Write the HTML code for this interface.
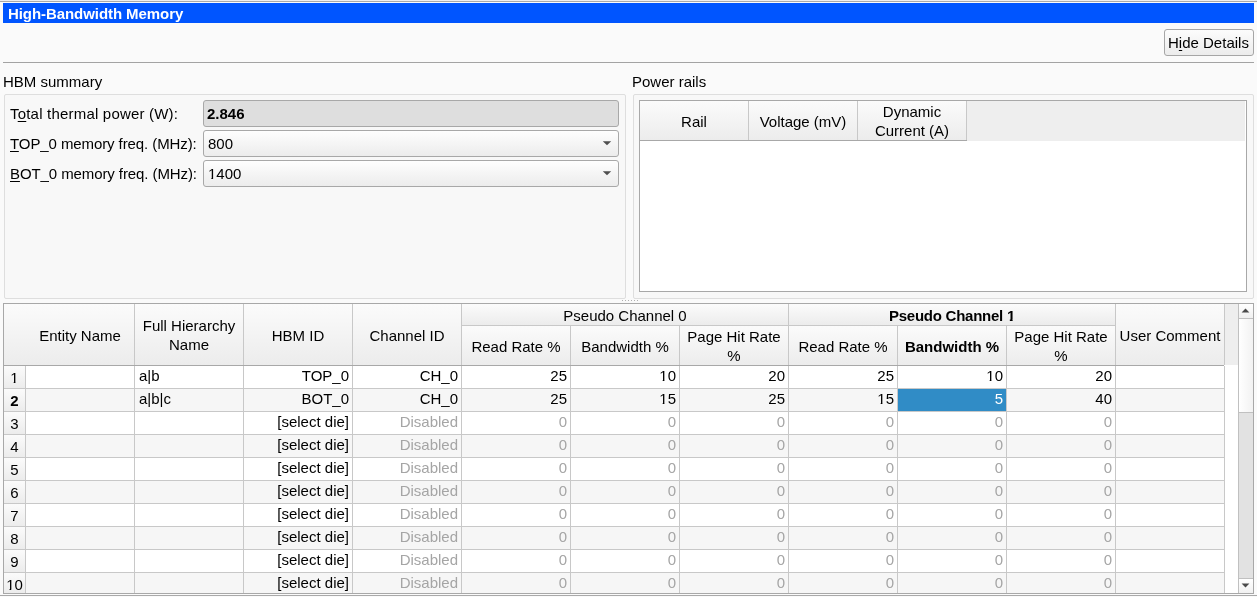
<!DOCTYPE html>
<html><head><meta charset="utf-8"><style>
html,body{margin:0;padding:0;}
body{width:1257px;height:597px;overflow:hidden;position:relative;background:#fafafa;font-family:"Liberation Sans",sans-serif;font-size:15px;color:#000;}
body>div{position:absolute;box-sizing:content-box;}
.t{will-change:transform;white-space:nowrap;line-height:17px;height:17px;}
.oneb{display:inline-block;clip-path:polygon(0 0,100% 0,100% 12px,5.7px 12px,5.7px 17px,2.9px 17px,2.9px 12px,0 12px);}
.one{display:inline-block;clip-path:polygon(0 0,100% 0,100% 13px,5.1px 13px,5.1px 17px,3.4px 17px,3.4px 13px,0 13px);}
u{text-decoration:underline;text-underline-offset:2px;}
</style></head><body>
<div style="left:0px;top:1px;width:1257px;height:1px;background:#a9a9a9"></div>
<div style="left:0px;top:0px;width:1257px;height:1px;background:#eeeeee"></div>
<div style="left:3px;top:3px;width:1251px;height:20px;background:#0055ff"></div>
<div class="t" style="left:7.7px;top:5.00px;text-align:left;color:#fff;font-weight:bold;letter-spacing:-0.07px">High-Bandwidth Memory</div>
<div style="left:1164px;top:29px;width:88px;height:25px;border:1px solid #a6a6a6;border-radius:3px;background:linear-gradient(#fcfcfc,#ececec)"></div>
<div class="t" style="left:1167.5px;top:34.00px;text-align:left;">H<u>i</u>de Details</div>
<div style="left:3px;top:62px;width:1251px;height:1px;background:#a3a3a3"></div>
<div class="t" style="left:2.5px;top:73.00px;text-align:left;">HBM summary</div>
<div class="t" style="left:631.5px;top:73.00px;text-align:left;">Power rails</div>
<div style="left:4px;top:94px;width:620px;height:203px;border:1px solid #dedede;border-radius:2px;background:#f8f8f8"></div>
<div style="left:633px;top:94px;width:619px;height:203px;border:1px solid #dedede;border-radius:2px;background:#f8f8f8"></div>
<div class="t" style="left:9.7px;top:105.00px;text-align:left;letter-spacing:0.2px">T<u>o</u>tal thermal power (W):</div>
<div class="t" style="left:9.7px;top:135.00px;text-align:left;letter-spacing:-0.09px"><u>T</u>OP_0 memory freq. (MHz):</div>
<div class="t" style="left:9.7px;top:165.00px;text-align:left;letter-spacing:-0.09px"><u>B</u>OT_0 memory freq. (MHz):</div>
<div style="left:203px;top:100px;width:414px;height:25px;border:1px solid #a8a8a8;border-radius:3px;background:#dedede"></div>
<div class="t" style="left:207px;top:105.00px;text-align:left;font-weight:bold">2.846</div>
<div style="left:203px;top:130px;width:414px;height:25px;border:1px solid #a8a8a8;border-radius:3px;background:linear-gradient(#fefefe,#ececec)"></div>
<div class="t" style="left:208px;top:135.00px;text-align:left;">800</div>
<div style="left:203px;top:160px;width:414px;height:25px;border:1px solid #a8a8a8;border-radius:3px;background:linear-gradient(#fefefe,#ececec)"></div>
<div class="t" style="left:208px;top:165.00px;text-align:left;"><span class="one">1</span>400</div>
<div style="left:639px;top:100px;width:606px;height:190px;border:1px solid #a8a8a8;background:#fff"></div>
<div style="left:640px;top:101px;width:605px;height:40px;background:#eeeeee"></div>
<div style="left:640px;top:101px;width:108px;height:39px;background:linear-gradient(#fbfbfb,#ececec);border-right:1px solid #c8c8c8"></div>
<div style="left:749px;top:101px;width:108px;height:39px;background:linear-gradient(#fbfbfb,#ececec);border-right:1px solid #c8c8c8"></div>
<div style="left:858px;top:101px;width:108px;height:39px;background:linear-gradient(#fbfbfb,#ececec);border-right:1px solid #c8c8c8"></div>
<div style="left:640px;top:140px;width:327px;height:1px;background:#a8a8a8"></div>
<div class="t" style="left:640px;top:113.00px;width:108px;text-align:center;">Rail</div>
<div class="t" style="left:749px;top:113.00px;width:108px;text-align:center;">Voltage (mV)</div>
<div class="t" style="left:858px;top:103.00px;width:108px;text-align:center;">Dynamic</div>
<div class="t" style="left:858px;top:122.00px;width:108px;text-align:center;">Current (A)</div>
<div style="left:622px;top:300px;width:1px;height:1px;background:#b0b0b0"></div>
<div style="left:625px;top:300px;width:1px;height:1px;background:#b0b0b0"></div>
<div style="left:628px;top:300px;width:1px;height:1px;background:#b0b0b0"></div>
<div style="left:631px;top:300px;width:1px;height:1px;background:#b0b0b0"></div>
<div style="left:634px;top:300px;width:1px;height:1px;background:#b0b0b0"></div>
<div style="left:637px;top:300px;width:1px;height:1px;background:#b0b0b0"></div>
<div style="left:3px;top:303px;width:1249px;height:289px;border:1px solid #a8a8a8;background:#fff"></div>
<div style="left:26px;top:366px;width:1198px;height:22px;background:#ffffff"></div>
<div style="left:26px;top:388px;width:1198px;height:1px;background:#c8c8c8"></div>
<div style="left:26px;top:389px;width:1198px;height:22px;background:#f6f6f6"></div>
<div style="left:26px;top:411px;width:1198px;height:1px;background:#c8c8c8"></div>
<div style="left:26px;top:412px;width:1198px;height:22px;background:#ffffff"></div>
<div style="left:26px;top:434px;width:1198px;height:1px;background:#c8c8c8"></div>
<div style="left:26px;top:435px;width:1198px;height:22px;background:#f6f6f6"></div>
<div style="left:26px;top:457px;width:1198px;height:1px;background:#c8c8c8"></div>
<div style="left:26px;top:458px;width:1198px;height:22px;background:#ffffff"></div>
<div style="left:26px;top:480px;width:1198px;height:1px;background:#c8c8c8"></div>
<div style="left:26px;top:481px;width:1198px;height:22px;background:#f6f6f6"></div>
<div style="left:26px;top:503px;width:1198px;height:1px;background:#c8c8c8"></div>
<div style="left:26px;top:504px;width:1198px;height:22px;background:#ffffff"></div>
<div style="left:26px;top:526px;width:1198px;height:1px;background:#c8c8c8"></div>
<div style="left:26px;top:527px;width:1198px;height:22px;background:#f6f6f6"></div>
<div style="left:26px;top:549px;width:1198px;height:1px;background:#c8c8c8"></div>
<div style="left:26px;top:550px;width:1198px;height:22px;background:#ffffff"></div>
<div style="left:26px;top:572px;width:1198px;height:1px;background:#c8c8c8"></div>
<div style="left:26px;top:573px;width:1198px;height:20px;background:#f6f6f6"></div>
<div style="left:134px;top:366px;width:1px;height:227px;background:#c8c8c8"></div>
<div style="left:243px;top:366px;width:1px;height:227px;background:#c8c8c8"></div>
<div style="left:352px;top:366px;width:1px;height:227px;background:#c8c8c8"></div>
<div style="left:461px;top:366px;width:1px;height:227px;background:#c8c8c8"></div>
<div style="left:570px;top:366px;width:1px;height:227px;background:#c8c8c8"></div>
<div style="left:679px;top:366px;width:1px;height:227px;background:#c8c8c8"></div>
<div style="left:788px;top:366px;width:1px;height:227px;background:#c8c8c8"></div>
<div style="left:897px;top:366px;width:1px;height:227px;background:#c8c8c8"></div>
<div style="left:1006px;top:366px;width:1px;height:227px;background:#c8c8c8"></div>
<div style="left:1115px;top:366px;width:1px;height:227px;background:#c8c8c8"></div>
<div style="left:1224px;top:366px;width:1px;height:227px;background:#c8c8c8"></div>
<div style="left:4px;top:304px;width:1234px;height:61px;background:#eeeeee"></div>
<div style="left:4px;top:304px;width:130px;height:61px;background:linear-gradient(#fbfbfb,#ececec);border-right:1px solid #c8c8c8"></div>
<div style="left:135px;top:304px;width:108px;height:61px;background:linear-gradient(#fbfbfb,#ececec);border-right:1px solid #c8c8c8"></div>
<div style="left:244px;top:304px;width:108px;height:61px;background:linear-gradient(#fbfbfb,#ececec);border-right:1px solid #c8c8c8"></div>
<div style="left:353px;top:304px;width:108px;height:61px;background:linear-gradient(#fbfbfb,#ececec);border-right:1px solid #c8c8c8"></div>
<div style="left:462px;top:304px;width:326px;height:21px;background:linear-gradient(#fbfbfb,#ececec);border-right:1px solid #c8c8c8"></div>
<div style="left:462px;top:325px;width:327px;height:1px;background:#c8c8c8"></div>
<div style="left:462px;top:326px;width:108px;height:39px;background:linear-gradient(#fbfbfb,#ececec);border-right:1px solid #c8c8c8"></div>
<div style="left:571px;top:326px;width:108px;height:39px;background:linear-gradient(#fbfbfb,#ececec);border-right:1px solid #c8c8c8"></div>
<div style="left:680px;top:326px;width:108px;height:39px;background:linear-gradient(#fbfbfb,#ececec);border-right:1px solid #c8c8c8"></div>
<div style="left:789px;top:304px;width:326px;height:21px;background:linear-gradient(#fbfbfb,#ececec);border-right:1px solid #c8c8c8"></div>
<div style="left:789px;top:325px;width:327px;height:1px;background:#c8c8c8"></div>
<div style="left:789px;top:326px;width:108px;height:39px;background:linear-gradient(#fbfbfb,#ececec);border-right:1px solid #c8c8c8"></div>
<div style="left:898px;top:326px;width:108px;height:39px;background:linear-gradient(#fbfbfb,#ececec);border-right:1px solid #c8c8c8"></div>
<div style="left:1007px;top:326px;width:108px;height:39px;background:linear-gradient(#fbfbfb,#ececec);border-right:1px solid #c8c8c8"></div>
<div style="left:1116px;top:304px;width:108px;height:61px;background:linear-gradient(#fbfbfb,#ececec);border-right:1px solid #c8c8c8"></div>
<div style="left:4px;top:365px;width:1220px;height:1px;background:#a8a8a8"></div>
<div style="left:4px;top:366px;width:21px;height:22px;background:linear-gradient(#fbfbfb,#ececec);border-right:1px solid #c8c8c8;border-bottom:1px solid #c8c8c8"></div>
<div style="left:4px;top:389px;width:21px;height:22px;background:linear-gradient(#fbfbfb,#ececec);border-right:1px solid #c8c8c8;border-bottom:1px solid #c8c8c8"></div>
<div style="left:4px;top:412px;width:21px;height:22px;background:linear-gradient(#fbfbfb,#ececec);border-right:1px solid #c8c8c8;border-bottom:1px solid #c8c8c8"></div>
<div style="left:4px;top:435px;width:21px;height:22px;background:linear-gradient(#fbfbfb,#ececec);border-right:1px solid #c8c8c8;border-bottom:1px solid #c8c8c8"></div>
<div style="left:4px;top:458px;width:21px;height:22px;background:linear-gradient(#fbfbfb,#ececec);border-right:1px solid #c8c8c8;border-bottom:1px solid #c8c8c8"></div>
<div style="left:4px;top:481px;width:21px;height:22px;background:linear-gradient(#fbfbfb,#ececec);border-right:1px solid #c8c8c8;border-bottom:1px solid #c8c8c8"></div>
<div style="left:4px;top:504px;width:21px;height:22px;background:linear-gradient(#fbfbfb,#ececec);border-right:1px solid #c8c8c8;border-bottom:1px solid #c8c8c8"></div>
<div style="left:4px;top:527px;width:21px;height:22px;background:linear-gradient(#fbfbfb,#ececec);border-right:1px solid #c8c8c8;border-bottom:1px solid #c8c8c8"></div>
<div style="left:4px;top:550px;width:21px;height:22px;background:linear-gradient(#fbfbfb,#ececec);border-right:1px solid #c8c8c8;border-bottom:1px solid #c8c8c8"></div>
<div style="left:4px;top:573px;width:21px;height:20px;background:linear-gradient(#fbfbfb,#ececec);border-right:1px solid #c8c8c8"></div>
<div class="t" style="left:26px;top:327.00px;width:108px;text-align:center;">Entity Name</div>
<div class="t" style="left:135px;top:317.00px;width:108px;text-align:center;">Full Hierarchy</div>
<div class="t" style="left:135px;top:336.00px;width:108px;text-align:center;">Name</div>
<div class="t" style="left:244px;top:327.00px;width:108px;text-align:center;">HBM ID</div>
<div class="t" style="left:353px;top:327.00px;width:108px;text-align:center;">Channel ID</div>
<div class="t" style="left:462px;top:307.00px;width:326px;text-align:center;">Pseudo Channel 0</div>
<div class="t" style="left:789px;top:307.00px;width:326px;text-align:center;font-weight:bold;letter-spacing:-0.25px">Pseudo Channel <span class="oneb">1</span></div>
<div class="t" style="left:462px;top:338.00px;width:108px;text-align:center;">Read Rate %</div>
<div class="t" style="left:571px;top:338.00px;width:108px;text-align:center;">Bandwidth %</div>
<div class="t" style="left:680px;top:328.00px;width:108px;text-align:center;">Page Hit Rate</div>
<div class="t" style="left:680px;top:347.00px;width:108px;text-align:center;">%</div>
<div class="t" style="left:789px;top:338.00px;width:108px;text-align:center;">Read Rate %</div>
<div class="t" style="left:898px;top:338.00px;width:108px;text-align:center;font-weight:bold">Bandwidth %</div>
<div class="t" style="left:1007px;top:328.00px;width:108px;text-align:center;">Page Hit Rate</div>
<div class="t" style="left:1007px;top:347.00px;width:108px;text-align:center;">%</div>
<div class="t" style="left:1116px;top:327.00px;width:108px;text-align:center;">User Comment</div>
<div style="left:898px;top:389px;width:108px;height:22px;background:#308cc6"></div>
<div class="t" style="left:4px;top:369.00px;width:21px;text-align:center;"><span class="one">1</span></div>
<div class="t" style="left:138.5px;top:367.00px;text-align:left;">a|b</div>
<div class="t" style="left:49px;top:367.00px;width:300px;text-align:right;">TOP_0</div>
<div class="t" style="left:158px;top:367.00px;width:300px;text-align:right;">CH_0</div>
<div class="t" style="left:267px;top:367.00px;width:300px;text-align:right;">25</div>
<div class="t" style="left:376px;top:367.00px;width:300px;text-align:right;"><span class="one">1</span>0</div>
<div class="t" style="left:485px;top:367.00px;width:300px;text-align:right;">20</div>
<div class="t" style="left:594px;top:367.00px;width:300px;text-align:right;">25</div>
<div class="t" style="left:703px;top:367.00px;width:300px;text-align:right;"><span class="one">1</span>0</div>
<div class="t" style="left:812px;top:367.00px;width:300px;text-align:right;">20</div>
<div class="t" style="left:4px;top:392.00px;width:21px;text-align:center;font-weight:bold">2</div>
<div class="t" style="left:138.5px;top:390.00px;text-align:left;">a|b|c</div>
<div class="t" style="left:49px;top:390.00px;width:300px;text-align:right;">BOT_0</div>
<div class="t" style="left:158px;top:390.00px;width:300px;text-align:right;">CH_0</div>
<div class="t" style="left:267px;top:390.00px;width:300px;text-align:right;">25</div>
<div class="t" style="left:376px;top:390.00px;width:300px;text-align:right;"><span class="one">1</span>5</div>
<div class="t" style="left:485px;top:390.00px;width:300px;text-align:right;">25</div>
<div class="t" style="left:594px;top:390.00px;width:300px;text-align:right;"><span class="one">1</span>5</div>
<div class="t" style="left:703px;top:390.00px;width:300px;text-align:right;color:#fff">5</div>
<div class="t" style="left:812px;top:390.00px;width:300px;text-align:right;">40</div>
<div class="t" style="left:4px;top:415.00px;width:21px;text-align:center;">3</div>
<div class="t" style="left:49px;top:413.00px;width:300px;text-align:right;">[select die]</div>
<div class="t" style="left:158px;top:413.00px;width:300px;text-align:right;color:#a5a5a5">Disabled</div>
<div class="t" style="left:267px;top:413.00px;width:300px;text-align:right;color:#a5a5a5">0</div>
<div class="t" style="left:376px;top:413.00px;width:300px;text-align:right;color:#a5a5a5">0</div>
<div class="t" style="left:485px;top:413.00px;width:300px;text-align:right;color:#a5a5a5">0</div>
<div class="t" style="left:594px;top:413.00px;width:300px;text-align:right;color:#a5a5a5">0</div>
<div class="t" style="left:703px;top:413.00px;width:300px;text-align:right;color:#a5a5a5">0</div>
<div class="t" style="left:812px;top:413.00px;width:300px;text-align:right;color:#a5a5a5">0</div>
<div class="t" style="left:4px;top:438.00px;width:21px;text-align:center;">4</div>
<div class="t" style="left:49px;top:436.00px;width:300px;text-align:right;">[select die]</div>
<div class="t" style="left:158px;top:436.00px;width:300px;text-align:right;color:#a5a5a5">Disabled</div>
<div class="t" style="left:267px;top:436.00px;width:300px;text-align:right;color:#a5a5a5">0</div>
<div class="t" style="left:376px;top:436.00px;width:300px;text-align:right;color:#a5a5a5">0</div>
<div class="t" style="left:485px;top:436.00px;width:300px;text-align:right;color:#a5a5a5">0</div>
<div class="t" style="left:594px;top:436.00px;width:300px;text-align:right;color:#a5a5a5">0</div>
<div class="t" style="left:703px;top:436.00px;width:300px;text-align:right;color:#a5a5a5">0</div>
<div class="t" style="left:812px;top:436.00px;width:300px;text-align:right;color:#a5a5a5">0</div>
<div class="t" style="left:4px;top:461.00px;width:21px;text-align:center;">5</div>
<div class="t" style="left:49px;top:459.00px;width:300px;text-align:right;">[select die]</div>
<div class="t" style="left:158px;top:459.00px;width:300px;text-align:right;color:#a5a5a5">Disabled</div>
<div class="t" style="left:267px;top:459.00px;width:300px;text-align:right;color:#a5a5a5">0</div>
<div class="t" style="left:376px;top:459.00px;width:300px;text-align:right;color:#a5a5a5">0</div>
<div class="t" style="left:485px;top:459.00px;width:300px;text-align:right;color:#a5a5a5">0</div>
<div class="t" style="left:594px;top:459.00px;width:300px;text-align:right;color:#a5a5a5">0</div>
<div class="t" style="left:703px;top:459.00px;width:300px;text-align:right;color:#a5a5a5">0</div>
<div class="t" style="left:812px;top:459.00px;width:300px;text-align:right;color:#a5a5a5">0</div>
<div class="t" style="left:4px;top:484.00px;width:21px;text-align:center;">6</div>
<div class="t" style="left:49px;top:482.00px;width:300px;text-align:right;">[select die]</div>
<div class="t" style="left:158px;top:482.00px;width:300px;text-align:right;color:#a5a5a5">Disabled</div>
<div class="t" style="left:267px;top:482.00px;width:300px;text-align:right;color:#a5a5a5">0</div>
<div class="t" style="left:376px;top:482.00px;width:300px;text-align:right;color:#a5a5a5">0</div>
<div class="t" style="left:485px;top:482.00px;width:300px;text-align:right;color:#a5a5a5">0</div>
<div class="t" style="left:594px;top:482.00px;width:300px;text-align:right;color:#a5a5a5">0</div>
<div class="t" style="left:703px;top:482.00px;width:300px;text-align:right;color:#a5a5a5">0</div>
<div class="t" style="left:812px;top:482.00px;width:300px;text-align:right;color:#a5a5a5">0</div>
<div class="t" style="left:4px;top:507.00px;width:21px;text-align:center;">7</div>
<div class="t" style="left:49px;top:505.00px;width:300px;text-align:right;">[select die]</div>
<div class="t" style="left:158px;top:505.00px;width:300px;text-align:right;color:#a5a5a5">Disabled</div>
<div class="t" style="left:267px;top:505.00px;width:300px;text-align:right;color:#a5a5a5">0</div>
<div class="t" style="left:376px;top:505.00px;width:300px;text-align:right;color:#a5a5a5">0</div>
<div class="t" style="left:485px;top:505.00px;width:300px;text-align:right;color:#a5a5a5">0</div>
<div class="t" style="left:594px;top:505.00px;width:300px;text-align:right;color:#a5a5a5">0</div>
<div class="t" style="left:703px;top:505.00px;width:300px;text-align:right;color:#a5a5a5">0</div>
<div class="t" style="left:812px;top:505.00px;width:300px;text-align:right;color:#a5a5a5">0</div>
<div class="t" style="left:4px;top:530.00px;width:21px;text-align:center;">8</div>
<div class="t" style="left:49px;top:528.00px;width:300px;text-align:right;">[select die]</div>
<div class="t" style="left:158px;top:528.00px;width:300px;text-align:right;color:#a5a5a5">Disabled</div>
<div class="t" style="left:267px;top:528.00px;width:300px;text-align:right;color:#a5a5a5">0</div>
<div class="t" style="left:376px;top:528.00px;width:300px;text-align:right;color:#a5a5a5">0</div>
<div class="t" style="left:485px;top:528.00px;width:300px;text-align:right;color:#a5a5a5">0</div>
<div class="t" style="left:594px;top:528.00px;width:300px;text-align:right;color:#a5a5a5">0</div>
<div class="t" style="left:703px;top:528.00px;width:300px;text-align:right;color:#a5a5a5">0</div>
<div class="t" style="left:812px;top:528.00px;width:300px;text-align:right;color:#a5a5a5">0</div>
<div class="t" style="left:4px;top:553.00px;width:21px;text-align:center;">9</div>
<div class="t" style="left:49px;top:551.00px;width:300px;text-align:right;">[select die]</div>
<div class="t" style="left:158px;top:551.00px;width:300px;text-align:right;color:#a5a5a5">Disabled</div>
<div class="t" style="left:267px;top:551.00px;width:300px;text-align:right;color:#a5a5a5">0</div>
<div class="t" style="left:376px;top:551.00px;width:300px;text-align:right;color:#a5a5a5">0</div>
<div class="t" style="left:485px;top:551.00px;width:300px;text-align:right;color:#a5a5a5">0</div>
<div class="t" style="left:594px;top:551.00px;width:300px;text-align:right;color:#a5a5a5">0</div>
<div class="t" style="left:703px;top:551.00px;width:300px;text-align:right;color:#a5a5a5">0</div>
<div class="t" style="left:812px;top:551.00px;width:300px;text-align:right;color:#a5a5a5">0</div>
<div class="t" style="left:4px;top:576.00px;width:21px;text-align:center;"><span class="one">1</span>0</div>
<div class="t" style="left:49px;top:574.00px;width:300px;text-align:right;">[select die]</div>
<div class="t" style="left:158px;top:574.00px;width:300px;text-align:right;color:#a5a5a5">Disabled</div>
<div class="t" style="left:267px;top:574.00px;width:300px;text-align:right;color:#a5a5a5">0</div>
<div class="t" style="left:376px;top:574.00px;width:300px;text-align:right;color:#a5a5a5">0</div>
<div class="t" style="left:485px;top:574.00px;width:300px;text-align:right;color:#a5a5a5">0</div>
<div class="t" style="left:594px;top:574.00px;width:300px;text-align:right;color:#a5a5a5">0</div>
<div class="t" style="left:703px;top:574.00px;width:300px;text-align:right;color:#a5a5a5">0</div>
<div class="t" style="left:812px;top:574.00px;width:300px;text-align:right;color:#a5a5a5">0</div>
<div style="left:1238px;top:304px;width:1px;height:289px;background:#c0c0c0"></div>
<div style="left:1239px;top:304px;width:14px;height:289px;background:#e2e2e2"></div>
<div style="left:1239px;top:304px;width:14px;height:14px;background:linear-gradient(#ffffff,#f0f0f0);border-bottom:1px solid #c0c0c0"></div>
<div style="left:1239px;top:319px;width:14px;height:93px;background:linear-gradient(90deg,#ffffff,#f2f2f2);border-bottom:1px solid #c0c0c0"></div>
<div style="left:1239px;top:578px;width:14px;height:15px;background:linear-gradient(#ffffff,#f0f0f0);border-top:1px solid #c0c0c0"></div>
<svg style="position:absolute;left:0;top:0" width="1257" height="597"><polygon points="1241.6,312.6 1245.5,308.4 1249.4,312.6" fill="#4a4a4a"/><polygon points="1241.6,583.4 1245.5,587.6 1249.4,583.4" fill="#4a4a4a"/><polygon points="602.8,141.2 607,145.2 611.2,141.2" fill="#4f4f4f"/><polygon points="602.8,171.2 607,175.2 611.2,171.2" fill="#4f4f4f"/></svg>
<div style="left:3px;top:303px;width:1249px;height:289px;border:1px solid #a8a8a8"></div>
<div style="left:0px;top:595px;width:1257px;height:1px;background:#a9a9a9"></div>
</body></html>
